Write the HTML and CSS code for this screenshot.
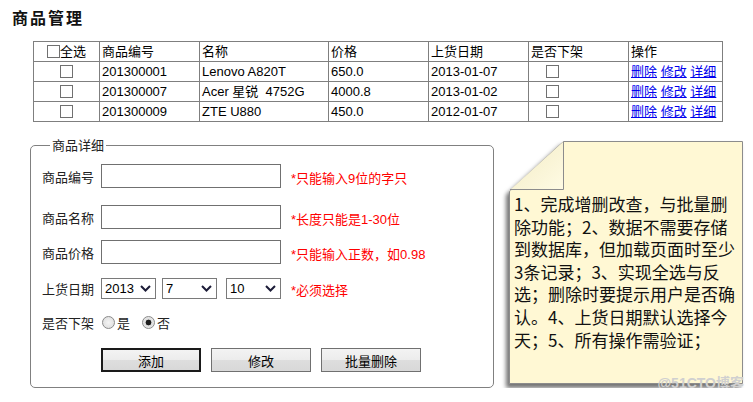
FILE: index.html
```html
<!DOCTYPE html>
<html lang="zh-CN">
<head>
<meta charset="utf-8">
<title>商品管理</title>
<link rel="stylesheet" href="styles.css">
</head>
<body>
<h1 class="title">商品管理</h1>
<table class="grid">
  <colgroup>
    <col class="c1"><col class="c2"><col class="c3"><col class="c4"><col class="c5"><col class="c6"><col class="c7">
  </colgroup>
  <tr>
    <td class="center"><input type="checkbox" class="cb">全选</td>
    <td>商品编号</td><td>名称</td><td>价格</td><td>上货日期</td><td>是否下架</td><td>操作</td>
  </tr>
  <tr>
    <td class="center"><input type="checkbox" class="cb"></td>
    <td>201300001</td><td>Lenovo A820T</td><td>650.0</td><td>2013-01-07</td>
    <td class="off"><input type="checkbox" class="cb"></td>
    <td><a href="#">删除</a> <a href="#">修改</a> <a href="#">详细</a></td>
  </tr>
  <tr>
    <td class="center"><input type="checkbox" class="cb"></td>
    <td>201300007</td><td>Acer 星锐&nbsp; 4752G</td><td>4000.8</td><td>2013-01-02</td>
    <td class="off"><input type="checkbox" class="cb"></td>
    <td><a href="#">删除</a> <a href="#">修改</a> <a href="#">详细</a></td>
  </tr>
  <tr>
    <td class="center"><input type="checkbox" class="cb"></td>
    <td>201300009</td><td>ZTE U880</td><td>450.0</td><td>2012-01-07</td>
    <td class="off"><input type="checkbox" class="cb"></td>
    <td><a href="#">删除</a> <a href="#">修改</a> <a href="#">详细</a></td>
  </tr>
</table>

<div class="detail">
  <fieldset class="box">
    <legend>商品详细</legend>
    <div class="frow r1">
      <span class="lbl">商品编号</span>
      <input type="text" class="txt">
      <span class="hint">*只能输入9位的字只</span>
    </div>
    <div class="frow r2">
      <span class="lbl">商品名称</span>
      <input type="text" class="txt">
      <span class="hint">*长度只能是1-30位</span>
    </div>
    <div class="frow r3">
      <span class="lbl">商品价格</span>
      <input type="text" class="txt">
      <span class="hint">*只能输入正数，如0.98</span>
    </div>
    <div class="frow r4">
      <span class="lbl">上货日期</span>
      <select class="sel s1"><option>2013</option></select>
      <select class="sel s2"><option>7</option></select>
      <select class="sel s3"><option>10</option></select>
      <span class="hint">*必须选择</span>
    </div>
    <div class="frow r5">
      <span class="lbl">是否下架</span>
      <input type="radio" name="off" class="rd rd1"><span class="rtxt first">是</span>
      <input type="radio" name="off" class="rd" checked><span class="rtxt">否</span>
    </div>
    <div class="frow r6">
      <span class="lbl"></span>
      <button class="btn default">添加</button>
      <button class="btn">修改</button>
      <button class="btn">批量删除</button>
    </div>
  </fieldset>

  <div class="note">
    <svg class="note-bg" width="236" height="244" viewBox="0 0 236 244">
      <defs>
        <linearGradient id="fold" x1="0" y1="0" x2="1" y2="1">
          <stop offset="0" stop-color="#f2ebc4"/>
          <stop offset="1" stop-color="#fffbe4"/>
        </linearGradient>
      </defs>
      <polygon points="0.5,50.5 54.5,0.5 233.5,0.5 233.5,242.5 0.5,242.5" fill="#fff8d4" stroke="#8c8c8c" stroke-width="1"/>
      <polygon points="0.5,49.5 54.5,0.5 54.5,48.5" fill="url(#fold)"/>
      <polyline points="54.5,0.5 54.5,48.5 1,48.5" fill="none" stroke="#8c8c8c" stroke-width="1"/>
    </svg>
    <p class="note-text">1、完成增删改查，与批量删除功能；2、数据不需要存储到数据库，但加载页面时至少3条记录；3、实现全选与反选；删除时要提示用户是否确认。4、上货日期默认选择今天；5、所有操作需验证；</p>
    <span class="mark">@51CTO博客</span>
  </div>
</div>
</body>
</html>
```

FILE: styles.css
```css
body {
  margin: 0;
  padding: 6px 0 0 12px;
  font-family: "Liberation Sans", Arial, "Noto Sans CJK SC", sans-serif;
  font-size: 13px;
  color: #000;
  background: #fff;
}

.title {
  margin: 0;
  font-size: 16px;
  line-height: 22px;
  height: 22px;
  letter-spacing: 2px;
  font-weight: bold;
  font-family: "Noto Sans CJK SC", sans-serif;
  color: #111;
}

.grid {
  margin: 13px 0 0 21px;
  border-collapse: collapse;
  table-layout: fixed;
  width: 689px;
}
.c1 { width: 66px; }
.c2 { width: 100px; }
.c3 { width: 129px; }
.c4 { width: 100px; }
.c5 { width: 100px; }
.c6 { width: 100px; }
.c7 { width: 94px; }

.grid tr { height: 20px; }
.grid td {
  border: 1px solid #7f7f7f;
  padding: 0 2px;
  line-height: 17px;
  white-space: nowrap;
  overflow: hidden;
}
.grid td.center { text-align: center; }
.grid td.off { padding-left: 17px; }
.grid a { color: #0000ee; text-decoration: underline; }

.cb {
  appearance: none;
  -webkit-appearance: none;
  width: 13px;
  height: 13px;
  margin: 0;
  border: 1px solid #707070;
  background: #fff;
  vertical-align: -2px;
  border-radius: 0;
}

.detail {
  display: flex;
  align-items: flex-start;
  margin: 16px 0 0 18px;
}

.box {
  box-sizing: border-box;
  width: 464px;
  margin: 0;
  padding: 11px 10px 15px 11px;
  border: 1px solid #808080;
  border-radius: 5px;
  font-family: "Liberation Sans", Arial, "Noto Sans CJK SC", sans-serif;
}
.box legend {
  margin-left: 8px;
  padding: 0 2px;
  line-height: 15px;
  color: #222;
}

.frow {
  display: flex;
  align-items: center;
}
.r2 { margin-top: 17px; }
.r3 { margin-top: 11px; }
.r4 { margin-top: 14px; }
.r5 { margin-top: 13px; height: 20px; }
.r6 { margin-top: 16px; }

.lbl {
  width: 59px;
  flex: none;
  color: #222;
}

.txt {
  box-sizing: border-box;
  width: 180px;
  height: 24px;
  margin: 0;
  border: 1px solid #707070;
  padding: 0 3px;
  font: inherit;
  background: #fff;
}

.hint {
  color: #ff0000;
  margin-left: 10px;
  margin-top: 2px;
}

.sel {
  appearance: none;
  -webkit-appearance: none;
  box-sizing: border-box;
  width: 55px;
  height: 21px;
  margin: 0;
  padding: 0 0 0 3px;
  border: 1px solid #7a7a7a;
  border-radius: 0;
  font: 13px "Liberation Sans", Arial, sans-serif;
  color: #000;
  background: #fff url("data:image/svg+xml;utf8,<svg xmlns='http://www.w3.org/2000/svg' width='11' height='7' viewBox='0 0 11 7'><polyline points='1,1 5.5,5.5 10,1' fill='none' stroke='%231c1c38' stroke-width='2'/></svg>") no-repeat right 4px center;
}
.s1 { margin-right: 6px; }
.s2 { margin-right: 9px; }

.rd {
  appearance: none;
  -webkit-appearance: none;
  box-sizing: border-box;
  width: 13px;
  height: 13px;
  margin: 0 2px 0 1px;
  border: 1px solid #8a8a8a;
  border-radius: 50%;
  background: radial-gradient(circle, #f4f4f4 0, #e2e2e2 70%, #f0f0f0 100%);
}
.rd:checked {
  background: radial-gradient(circle, #1c1c1c 0 2.6px, #dcdcdc 3.2px, #f2f2f2 100%);
}
.rtxt { color: #222; }
.rtxt.first { margin-right: 11px; }

.btn {
  box-sizing: border-box;
  width: 100px;
  height: 24px;
  margin: 0 10px 0 0;
  padding: 0;
  border: 1px solid #707070;
  border-radius: 0;
  background: linear-gradient(#f3f3f3, #ececec 50%, #dedede 51%, #d8d8d8);
  font: 13px "Liberation Sans", Arial, "Noto Sans CJK SC", sans-serif;
  color: #000;
}
.btn.default { border: 2px solid #1a1a1a; }

.note {
  position: relative;
  flex: none;
  box-sizing: border-box;
  width: 234px;
  height: 243px;
  margin: 3px 0 0 15px;
  padding: 52px 7px 0 5px;
}
.note-bg {
  position: absolute;
  left: 0;
  top: 0;
  filter: drop-shadow(-3px 4px 2px rgba(0, 0, 0, 0.55));
}
.note-text {
  position: relative;
  margin: 0;
  font-family: "Noto Sans CJK SC", sans-serif;
  font-size: 17px;
  line-height: 22.6px;
  color: #111;
}
.mark {
  position: absolute;
  right: -1px;
  bottom: -8px;
  font: bold 14px "Liberation Sans", Arial, "Noto Sans CJK SC", sans-serif;
  color: #d0d0d0;
}
```
